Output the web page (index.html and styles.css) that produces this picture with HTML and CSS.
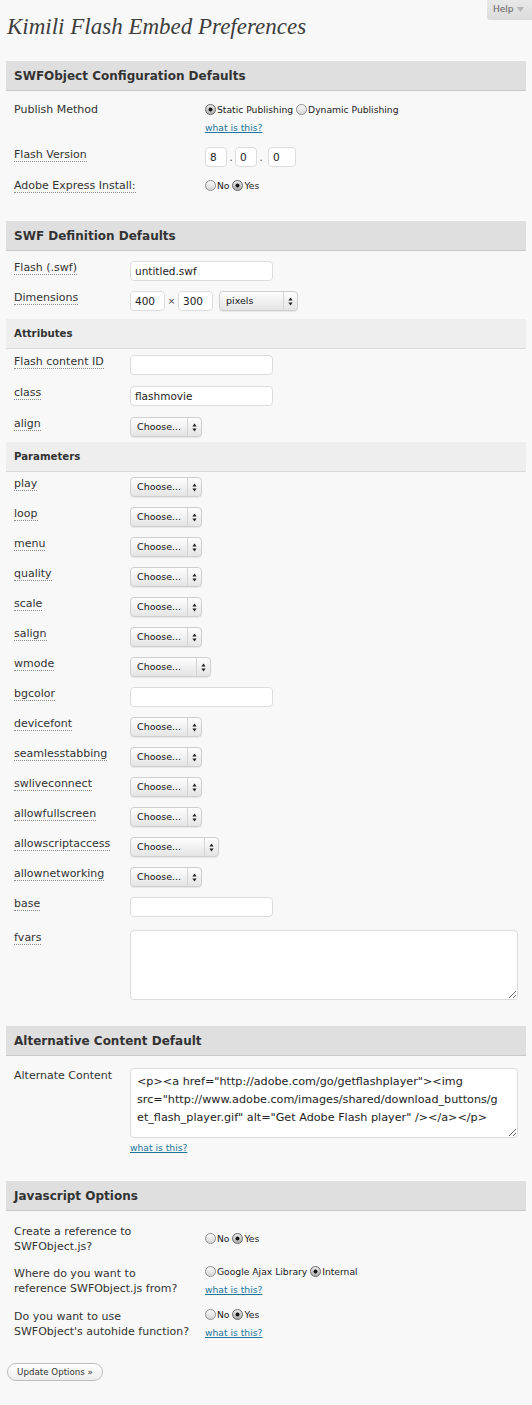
FILE: index.html
```html
<!DOCTYPE html>
<html lang="en">
<head>
<meta charset="utf-8">
<title>Kimili Flash Embed Preferences</title>
<link rel="stylesheet" href="styles.css">
</head>
<body>
<div class="page">
  <header class="top">
    <h1 class="title">Kimili Flash Embed Preferences</h1>
    <div class="help">Help <svg class="help-caret" width="7" height="5" viewBox="0 0 7 5"><path d="M0 0H7L3.5 5z"/></svg></div>
  </header>

  <section class="sec sec-cfg">
    <h2 class="sec-head">SWFObject Configuration Defaults</h2>
    <div class="rows-cfg">
      <div class="row row-publish">
        <div class="lbl">Publish Method</div>
        <div class="ctl">
          <div class="radios"><label class="opt"><input class="radio" type="radio" name="pub" checked>Static Publishing</label> <label class="opt"><input class="radio" type="radio" name="pub">Dynamic Publishing</label></div>
          <a class="what" href="#">what is this?</a>
        </div>
      </div>
      <div class="row row-ver">
        <div class="lbl"><span class="abbr">Flash Version</span></div>
        <div class="ctl ctl-inline">
          <span class="inp w-v1">8</span><span class="dot">.</span><span class="inp w-v2">0</span><span class="dot">.</span><span class="inp w-v3">0</span>
        </div>
      </div>
      <div class="row row-express">
        <div class="lbl"><span class="abbr">Adobe Express Install:</span></div>
        <div class="ctl">
          <div class="radios"><label class="opt"><input class="radio" type="radio" name="exp">No</label> <label class="opt"><input class="radio" type="radio" name="exp" checked>Yes</label></div>
        </div>
      </div>
    </div>
  </section>

  <section class="sec sec-def">
    <h2 class="sec-head">SWF Definition Defaults</h2>
    <div class="group group-main">
      <div class="row">
        <div class="lbl"><span class="abbr">Flash (.swf)</span></div>
        <div class="ctl"><span class="inp w-text">untitled.swf</span></div>
      </div>
      <div class="row">
        <div class="lbl"><span class="abbr">Dimensions</span></div>
        <div class="ctl ctl-inline">
          <span class="inp w-dim">400</span><span class="times">×</span><span class="inp w-dim">300</span>
          <span class="select w-pixels"><span class="sel-text">pixels</span><span class="sel-arrow"><svg width="5" height="9" viewBox="0 0 5 9"><path d="M2.5 0.5L4.6 3.6H0.4zM2.5 8.5L0.4 5.4H4.6z"/></svg></span></span>
        </div>
      </div>
    </div>

    <h3 class="sub-head">Attributes</h3>
    <div class="group group-attr">
      <div class="row">
        <div class="lbl"><span class="abbr">Flash content ID</span></div>
        <div class="ctl"><span class="inp w-text"></span></div>
      </div>
      <div class="row">
        <div class="lbl"><span class="abbr">class</span></div>
        <div class="ctl"><span class="inp w-text">flashmovie</span></div>
      </div>
      <div class="row">
        <div class="lbl"><span class="abbr">align</span></div>
        <div class="ctl"><span class="select w-choose"><span class="sel-text">Choose...</span><span class="sel-arrow"><svg width="5" height="9" viewBox="0 0 5 9"><path d="M2.5 0.5L4.6 3.6H0.4zM2.5 8.5L0.4 5.4H4.6z"/></svg></span></span></div>
      </div>
    </div>

    <h3 class="sub-head">Parameters</h3>
    <div class="group group-param">
      <div class="row"><div class="lbl"><span class="abbr">play</span></div><div class="ctl"><span class="select w-choose"><span class="sel-text">Choose...</span><span class="sel-arrow"><svg width="5" height="9" viewBox="0 0 5 9"><path d="M2.5 0.5L4.6 3.6H0.4zM2.5 8.5L0.4 5.4H4.6z"/></svg></span></span></div></div>
      <div class="row"><div class="lbl"><span class="abbr">loop</span></div><div class="ctl"><span class="select w-choose"><span class="sel-text">Choose...</span><span class="sel-arrow"><svg width="5" height="9" viewBox="0 0 5 9"><path d="M2.5 0.5L4.6 3.6H0.4zM2.5 8.5L0.4 5.4H4.6z"/></svg></span></span></div></div>
      <div class="row"><div class="lbl"><span class="abbr">menu</span></div><div class="ctl"><span class="select w-choose"><span class="sel-text">Choose...</span><span class="sel-arrow"><svg width="5" height="9" viewBox="0 0 5 9"><path d="M2.5 0.5L4.6 3.6H0.4zM2.5 8.5L0.4 5.4H4.6z"/></svg></span></span></div></div>
      <div class="row"><div class="lbl"><span class="abbr">quality</span></div><div class="ctl"><span class="select w-choose"><span class="sel-text">Choose...</span><span class="sel-arrow"><svg width="5" height="9" viewBox="0 0 5 9"><path d="M2.5 0.5L4.6 3.6H0.4zM2.5 8.5L0.4 5.4H4.6z"/></svg></span></span></div></div>
      <div class="row"><div class="lbl"><span class="abbr">scale</span></div><div class="ctl"><span class="select w-choose"><span class="sel-text">Choose...</span><span class="sel-arrow"><svg width="5" height="9" viewBox="0 0 5 9"><path d="M2.5 0.5L4.6 3.6H0.4zM2.5 8.5L0.4 5.4H4.6z"/></svg></span></span></div></div>
      <div class="row"><div class="lbl"><span class="abbr">salign</span></div><div class="ctl"><span class="select w-choose"><span class="sel-text">Choose...</span><span class="sel-arrow"><svg width="5" height="9" viewBox="0 0 5 9"><path d="M2.5 0.5L4.6 3.6H0.4zM2.5 8.5L0.4 5.4H4.6z"/></svg></span></span></div></div>
      <div class="row"><div class="lbl"><span class="abbr">wmode</span></div><div class="ctl"><span class="select w-wmode"><span class="sel-text">Choose...</span><span class="sel-arrow"><svg width="5" height="9" viewBox="0 0 5 9"><path d="M2.5 0.5L4.6 3.6H0.4zM2.5 8.5L0.4 5.4H4.6z"/></svg></span></span></div></div>
      <div class="row"><div class="lbl"><span class="abbr">bgcolor</span></div><div class="ctl"><span class="inp w-text"></span></div></div>
      <div class="row"><div class="lbl"><span class="abbr">devicefont</span></div><div class="ctl"><span class="select w-choose"><span class="sel-text">Choose...</span><span class="sel-arrow"><svg width="5" height="9" viewBox="0 0 5 9"><path d="M2.5 0.5L4.6 3.6H0.4zM2.5 8.5L0.4 5.4H4.6z"/></svg></span></span></div></div>
      <div class="row"><div class="lbl"><span class="abbr">seamlesstabbing</span></div><div class="ctl"><span class="select w-choose"><span class="sel-text">Choose...</span><span class="sel-arrow"><svg width="5" height="9" viewBox="0 0 5 9"><path d="M2.5 0.5L4.6 3.6H0.4zM2.5 8.5L0.4 5.4H4.6z"/></svg></span></span></div></div>
      <div class="row"><div class="lbl"><span class="abbr">swliveconnect</span></div><div class="ctl"><span class="select w-choose"><span class="sel-text">Choose...</span><span class="sel-arrow"><svg width="5" height="9" viewBox="0 0 5 9"><path d="M2.5 0.5L4.6 3.6H0.4zM2.5 8.5L0.4 5.4H4.6z"/></svg></span></span></div></div>
      <div class="row"><div class="lbl"><span class="abbr">allowfullscreen</span></div><div class="ctl"><span class="select w-choose"><span class="sel-text">Choose...</span><span class="sel-arrow"><svg width="5" height="9" viewBox="0 0 5 9"><path d="M2.5 0.5L4.6 3.6H0.4zM2.5 8.5L0.4 5.4H4.6z"/></svg></span></span></div></div>
      <div class="row"><div class="lbl"><span class="abbr">allowscriptaccess</span></div><div class="ctl"><span class="select w-script"><span class="sel-text">Choose...</span><span class="sel-arrow"><svg width="5" height="9" viewBox="0 0 5 9"><path d="M2.5 0.5L4.6 3.6H0.4zM2.5 8.5L0.4 5.4H4.6z"/></svg></span></span></div></div>
      <div class="row"><div class="lbl"><span class="abbr">allownetworking</span></div><div class="ctl"><span class="select w-choose"><span class="sel-text">Choose...</span><span class="sel-arrow"><svg width="5" height="9" viewBox="0 0 5 9"><path d="M2.5 0.5L4.6 3.6H0.4zM2.5 8.5L0.4 5.4H4.6z"/></svg></span></span></div></div>
      <div class="row"><div class="lbl"><span class="abbr">base</span></div><div class="ctl"><span class="inp w-text"></span></div></div>
      <div class="row row-fvars"><div class="lbl"><span class="abbr">fvars</span></div><div class="ctl"><textarea class="area area-fvars"></textarea></div></div>
    </div>
  </section>

  <section class="sec sec-alt">
    <h2 class="sec-head">Alternative Content Default</h2>
    <div class="row row-alt">
      <div class="lbl">Alternate Content</div>
      <div class="ctl">
        <textarea class="area area-alt">&lt;p&gt;&lt;a href="http://adobe.com/go/getflashplayer"&gt;&lt;img
src="http://www.adobe.com/images/shared/download_buttons/g
et_flash_player.gif" alt="Get Adobe Flash player" /&gt;&lt;/a&gt;&lt;/p&gt;</textarea>
        <a class="what" href="#">what is this?</a>
      </div>
    </div>
  </section>

  <section class="sec sec-js">
    <h2 class="sec-head">Javascript Options</h2>
    <div class="rows-js">
      <div class="row">
        <div class="lbl">Create a reference to<br>SWFObject.js?</div>
        <div class="ctl">
          <div class="radios"><label class="opt"><input class="radio" type="radio" name="ref">No</label> <label class="opt"><input class="radio" type="radio" name="ref" checked>Yes</label></div>
        </div>
      </div>
      <div class="row">
        <div class="lbl">Where do you want to<br>reference SWFObject.js from?</div>
        <div class="ctl">
          <div class="radios"><label class="opt"><input class="radio" type="radio" name="src">Google Ajax Library</label> <label class="opt"><input class="radio" type="radio" name="src" checked>Internal</label></div>
          <a class="what" href="#">what is this?</a>
        </div>
      </div>
      <div class="row">
        <div class="lbl">Do you want to use<br>SWFObject's autohide function?</div>
        <div class="ctl">
          <div class="radios"><label class="opt"><input class="radio" type="radio" name="hide">No</label> <label class="opt"><input class="radio" type="radio" name="hide" checked>Yes</label></div>
          <a class="what" href="#">what is this?</a>
        </div>
      </div>
    </div>
  </section>

  <div class="submit"><button class="btn" type="button">Update Options »</button></div>
</div>
</body>
</html>
```

FILE: styles.css
```css
* { box-sizing: border-box; }

body {
  margin: 0;
  background: #f8f8f8;
  font-family: "DejaVu Sans", sans-serif;
  font-size: 11px;
  color: #333;
}

.page {
  padding: 0 6px 20px;
}

/* top */
.top {
  display: flex;
  justify-content: space-between;
  align-items: flex-start;
  margin-right: -6px;
}

.title {
  margin: 12px 0 0 1px;
  font-family: "Liberation Serif", serif;
  font-style: italic;
  font-weight: normal;
  font-size: 23px;
  line-height: 30px;
  color: #3d3d3d;
}

.help {
  height: 20px;
  width: 45px;
  padding-left: 6px;
  background: linear-gradient(#e8e8e8, #dcdcdc);
  border-radius: 0 0 0 3px;
  font-size: 9px;
  line-height: 19px;
  color: #606060;
}

.help-caret {
  fill: #b5b5b5;
  vertical-align: 0;
  margin-left: 1px;
}

/* sections */
.sec-cfg { margin-top: 19px; }
.sec + .sec { margin-top: 26px; }

.sec-head {
  margin: 0;
  height: 30px;
  padding-left: 8px;
  background: #dfdfdf;
  border-bottom: 1px solid #c8c8c8;
  font-size: 12px;
  font-weight: bold;
  line-height: 30px;
  color: #333;
}

.sub-head {
  margin: 0;
  height: 30px;
  padding-left: 8px;
  background: #eeeeee;
  border-bottom: 1px solid #dadada;
  font-size: 10.2px;
  font-weight: bold;
  line-height: 30px;
  color: #333;
}

.row {
  display: grid;
  padding-left: 8px;
  align-items: start;
}

.lbl {
  line-height: 14px;
  color: #333;
}

.abbr {
  border-bottom: 1px dotted #8a8a8a;
}

.ctl {
  display: flex;
  flex-direction: column;
  align-items: flex-start;
}

.ctl-inline {
  flex-direction: row;
  align-items: center;
}

/* config section */
.rows-cfg .row {
  grid-template-columns: 191px 1fr;
  padding-top: 11px;
}
.rows-cfg .row-publish .lbl { line-height: 16px; }
.rows-cfg .row-ver { padding-top: 12px; }
.rows-cfg .row-ver .lbl { padding-top: 1px; }
.rows-cfg .row-express { padding-bottom: 1px; }
.rows-cfg .row-express .lbl { line-height: 16px; }

.radios {
  line-height: 16px;
  font-size: 9.2px;
  color: #222;
  white-space: nowrap;
}

.opt { display: inline; }

.radio {
  -webkit-appearance: none;
  appearance: none;
  width: 11px;
  height: 11px;
  margin: 0 1px 0 0;
  border: 1px solid #8e8e8e;
  border-radius: 50%;
  background: linear-gradient(#fbfbfb, #d6d6d6);
  vertical-align: -2px;
}

.radio:checked {
  border-color: #6a6a6a;
  background: radial-gradient(circle, #151515 0 1.7px, transparent 2.3px), linear-gradient(#ececec, #acacac);
}

.what {
  display: block;
  margin-top: 3px;
  line-height: 14px;
  font-size: 9.2px;
  color: #21759b;
  text-decoration: underline;
}

/* inputs */
.inp {
  display: block;
  height: 20px;
  padding: 0 4px;
  background: #fff;
  border: 1px solid #dcdcdc;
  border-radius: 4px;
  font-size: 10.5px;
  line-height: 18px;
  color: #222;
}

.w-text { width: 143px; }
.w-v1 { width: 22px; }
.w-v2 { width: 22px; }
.w-v3 { width: 28px; }
.w-dim { width: 35px; }

.dot {
  width: 8px;
  text-align: center;
  font-size: 10px;
  color: #444;
}
.dot + .inp.w-v3 { margin-left: 3px; }

.times {
  width: 13px;
  text-align: center;
  font-size: 9px;
  color: #444;
}

/* selects */
.select {
  display: flex;
  height: 20px;
  border: 1px solid #cfcfcf;
  border-radius: 4px;
  background: linear-gradient(#fdfdfd, #f1f1f1 50%, #e4e4e4);
  box-shadow: 0 1px 1px rgba(0, 0, 0, 0.07);
  font-size: 9.5px;
  color: #111;
}

.w-pixels { width: 79px; margin-left: 6px; }
.w-choose { width: 72px; }
.w-wmode { width: 81px; }
.w-script { width: 89px; }

.sel-text {
  flex: 1;
  padding-left: 6px;
  line-height: 18px;
}

.sel-arrow {
  width: 14px;
  border-left: 1px solid #d4d4d4;
  display: flex;
  align-items: center;
  justify-content: center;
  fill: #222;
}

/* definition section */
.sec-def .row { grid-template-columns: 116px 1fr; }
.group-main { padding: 5px 0 3px; }
.group-main .row { padding-top: 5px; padding-bottom: 5px; }
.group-attr .row { padding-top: 6px; padding-bottom: 5px; }
.group-param .row { padding-top: 5px; padding-bottom: 5px; }
.group-param .row-fvars { padding-top: 8px; padding-bottom: 0; }
.row-fvars .lbl { line-height: 16px; }

.area {
  display: block;
  width: 388px;
  height: 70px;
  margin: 0;
  background: #fff;
  border: 1px solid #dcdcdc;
  border-radius: 4px;
  font-family: "DejaVu Sans", sans-serif;
  color: #222;
}

.area-alt {
  padding: 4px 6px;
  font-size: 11.2px;
  line-height: 18px;
  white-space: pre;
  overflow: hidden;
}

/* alternative content */
.sec-alt .row-alt {
  grid-template-columns: 116px 1fr;
  padding-top: 12px;
}
.row-alt .lbl { line-height: 16px; }

/* js */
.rows-js { padding-top: 13px; }
.rows-js .row {
  grid-template-columns: 191px 1fr;
  align-items: center;
}
.rows-js .row + .row { margin-top: 10px; }
.rows-js .lbl { line-height: 15px; }

/* submit */
.submit { margin-top: 23px; padding-left: 1px; }

.btn {
  height: 18px;
  width: 96px;
  padding: 0;
  border: 1px solid #bdbdbd;
  border-radius: 10px;
  background: linear-gradient(#ffffff, #ededed);
  font-family: "DejaVu Sans", sans-serif;
  font-size: 8.7px;
  line-height: 16px;
  color: #333;
}
```
